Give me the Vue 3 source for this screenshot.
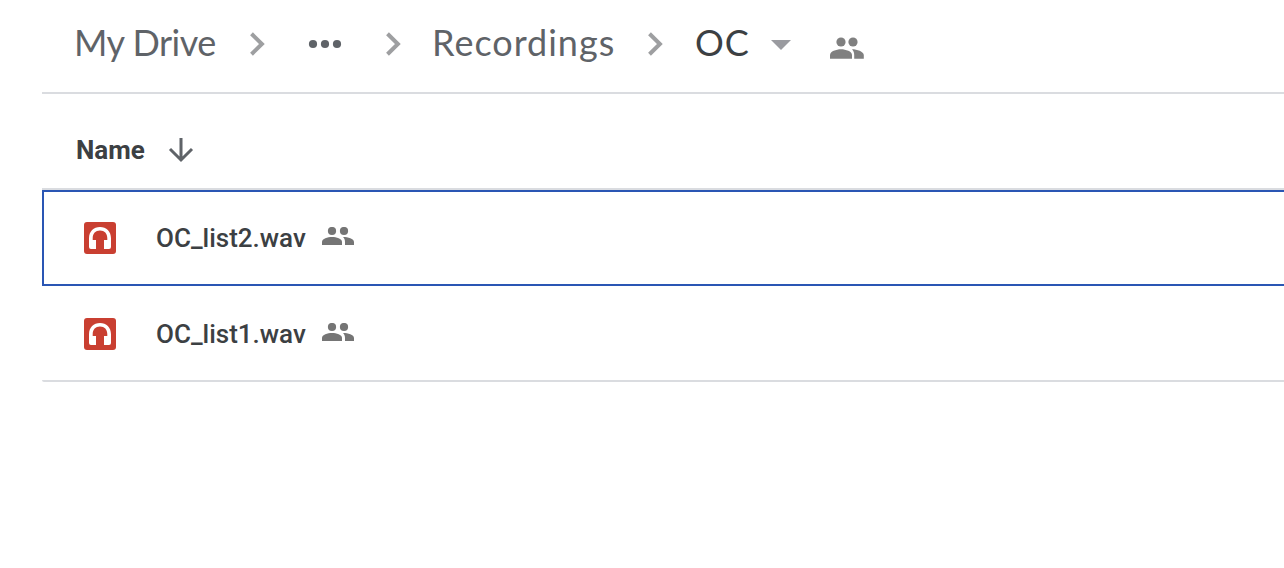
<script setup>
const files = [
  { name: 'OC_list2.wav', selected: true },
  { name: 'OC_list1.wav', selected: false },
]
</script>

<template>
  <main class="drive">
    <nav class="crumbs">
      <span class="crumb root">My Drive</span>
      <svg class="chev c1" width="16" height="24" viewBox="0 0 16 24"><path d="M1.500 1.800 11.900 12 1.500 22.200" /></svg>
      <svg class="dots" width="34" height="10" viewBox="0 0 34 10"><circle cx="5" cy="5" r="4.100" /><circle cx="17" cy="5" r="4.100" /><circle cx="29" cy="5" r="4.100" /></svg>
      <svg class="chev c2" width="16" height="24" viewBox="0 0 16 24"><path d="M1.500 1.800 11.900 12 1.500 22.200" /></svg>
      <span class="crumb folder">Recordings</span>
      <svg class="chev c3" width="16" height="24" viewBox="0 0 16 24"><path d="M1.500 1.800 11.900 12 1.500 22.200" /></svg>
      <span class="crumb current">OC</span>
      <svg class="caret" width="20" height="10" viewBox="0 0 20 10"><path d="M0 0h20L10 10z" /></svg>
      <svg class="people large" width="34" height="22" viewBox="0 0 34 22"><circle cx="11" cy="5" r="4.6" /><circle cx="23" cy="5" r="4.6" /><path d="M0 21.7v-3.8C0 14.4 6.2 12.2 11 12.2s11 2.2 11 5.7v3.8z" /><path d="M22 12.2c5 0 11.8 2.2 11.8 5.8v3.7h-9.6v-3.8c0-2.4-.8-4.2-2.2-5.7z" /></svg>
    </nav>

    <section class="list">
      <header class="head">
        <span class="label">Name</span>
        <svg class="arrow" width="26" height="26" viewBox="0 0 26 26"><path d="M13 1v21.5M2 12 13 23 24 12" /></svg>
      </header>
      <div v-for="file in files" :key="file.name" class="row" :class="{ selected: file.selected }">
        <svg class="audio" width="32" height="32" viewBox="0 0 32 32"><rect width="32" height="32" rx="3" fill="#c93f31" /><path d="M5 16.200C5 9.400 9.600 5 16 5s11 4.400 11 11.200V25q0 2-2 2h-5v-9h3.300v-1.800C23.300 11.600 20.500 8.500 16 8.500s-7.300 3.100-7.300 7.700V18H12v9H7q-2 0-2-2z" fill="#fff" /></svg>
        <span class="name">{{ file.name }}</span>
        <svg class="people" width="32" height="18" viewBox="0 0 32 18"><circle cx="10" cy="4" r="4.100" /><circle cx="22" cy="4" r="4.100" /><path d="M0 18v-3C0 11.800 5.500 10 10 10s10 1.800 10 5v3z" /><path d="M21 10c5 0 11 1.800 11 5v3h-9v-3c0-2.200-.6-3.700-2-5z" /></svg>
      </div>
    </section>
  </main>
</template>

<style>
body {
  background: #fff;
}
</style>

<style scoped>
.drive {
  box-sizing: border-box;
  height: 568px;
  padding-left: 42px;
  overflow: hidden;
  background: #fff;
  font-family: Roboto, sans-serif;
}
svg {
  display: block;
  flex: none;
}
.crumbs {
  box-sizing: border-box;
  display: flex;
  align-items: center;
  height: 94px;
  padding: 0 0 4px 32px;
  border-bottom: 2px solid #dadce0;
}
.crumb {
  flex: none;
  margin-bottom: 5px;
  font-family: Lato, sans-serif;
  font-size: 36px;
  line-height: 44px;
  color: #5f6368;
  white-space: nowrap;
}
.root {
  width: 176px;
  letter-spacing: -0.5px;
}
.folder {
  width: 215px;
  letter-spacing: 1px;
}
.current {
  width: 76px;
  color: #3c4043;
  letter-spacing: 1px;
}
.chev {
  fill: none;
  stroke: #9e9fa1;
  stroke-width: 4;
}
.c1 {
  margin-right: 42px;
}
.c2 {
  margin: 0 30px 0 44px;
}
.c3 {
  margin: 0 31px 0 1px;
}
.dots {
  fill: #5f6368;
}
.caret {
  fill: #9a9ba0;
  margin: 2px 39px 0 0;
}
.people {
  fill: #757575;
}
.people.large {
  fill: #808080;
  margin-top: 8px;
}
.list {
  border-bottom: 2px solid #dadce0;
  border-radius: 2px 0 0 2px;
}
.head {
  box-sizing: border-box;
  display: flex;
  align-items: center;
  height: 96px;
  padding: 17px 0 0 34px;
  border-bottom: 2px solid #dadce0;
  color: #3c4043;
}
.label {
  width: 92px;
  font-size: 26px;
  font-weight: 700;
  line-height: 32px;
}
.arrow {
  fill: none;
  stroke: #5f6368;
  stroke-width: 3;
}
.row {
  box-sizing: border-box;
  display: flex;
  align-items: center;
  height: 94px;
  padding: 2px 0 0 42px;
}
.row.selected {
  height: 96px;
  padding: 0 0 0 40px;
  border: 2px solid #2a56b4;
  border-right: 0;
}
.name {
  width: 166px;
  margin-left: 40px;
  font-size: 26px;
  font-weight: 500;
  line-height: 32px;
  color: #3c4043;
}
.row .people {
  margin-bottom: 4px;
}
</style>
